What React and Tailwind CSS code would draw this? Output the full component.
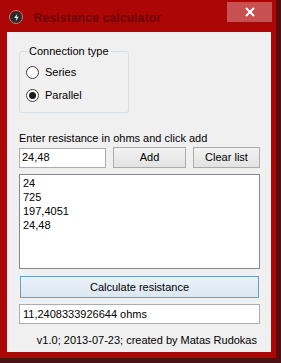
import React from "react";

function Radio({ checked, label }) {
  return (
    <div className="flex items-center gap-[6px] h-[16px]">
      <div className="w-[13px] h-[13px] rounded-full border border-[#3c3c3c] bg-white flex items-center justify-center">
        {checked && <div className="w-[7px] h-[7px] rounded-full bg-[#1a1a1a]" />}
      </div>
      <span>{label}</span>
    </div>
  );
}

const btn =
  "h-[21px] border border-[#acacac] bg-gradient-to-b from-[#f2f2f2] to-[#e3e3e3] flex items-center justify-center";

export default function App() {
  return (
    <div
      className="w-[281px] h-[363px] bg-[#4a1214] overflow-hidden text-[11px] text-black"
      style={{ fontFamily: '"Liberation Sans", Arial, sans-serif' }}
    >
      <div className="w-[277px] h-[358px] bg-[#ad0606] flex flex-col border-r border-[#7a0303]">
        {/* Title bar */}
        <div className="h-[32px] flex items-start shrink-0">
          <div className="ml-[9px] mt-[10px] w-[14px] h-[14px] rounded-full bg-[#2a2a2a] border border-[#d87070] flex items-center justify-center">
            <svg width="9" height="9" viewBox="0 0 10 10">
              <path d="M6 0.5 L2.5 5.5 L5 5.5 L4 9.5 L7.5 4.2 L5 4.2 Z" fill="#f2f2f2" />
            </svg>
          </div>
          <div className="ml-[11px] mt-[9px] text-[12px] font-bold text-[#6a0404] tracking-[0.2px] blur-[0.5px]">
            Resistance calculator
          </div>
          <div className="ml-auto mt-[2px] mr-[4px] w-[45px] h-[20px] bg-[#c75050] flex items-center justify-center">
            <svg width="10" height="10" viewBox="0 0 10 10">
              <path d="M1 1 L9 9 M9 1 L1 9" stroke="#ffffff" strokeWidth="2" />
            </svg>
          </div>
        </div>
        {/* Client area */}
        <div className="ml-[7px] mr-[5px] h-[320px] bg-[#f0f0f0] pl-[12px] flex flex-col">
          {/* Group box */}
          <fieldset className="mt-[12px] w-[110px] h-[69px] border border-[#d5dfe5] rounded-[3px] pl-[6px] pt-[6px] flex flex-col gap-[7px]">
            <legend className="ml-[2px] px-[1px] leading-[14px]">Connection type</legend>
            <Radio label="Series" />
            <Radio checked label="Parallel" />
          </fieldset>
          <div className="mt-[18px] leading-[14px]">Enter resistance in ohms and click add</div>
          <div className="mt-[2px] flex items-center">
            <div className="w-[87px] h-[20px] bg-white border border-[#abadb3] px-[2px] flex items-center">24,48</div>
            <div className={"ml-[7px] w-[73px] " + btn}>Add</div>
            <div className={"ml-[7px] w-[67px] " + btn}>Clear list</div>
          </div>
          <div className="mt-[6px] w-[241px] h-[95px] bg-white border border-[#828790] px-[3px] pt-[1px] leading-[14px]">
            <div>24</div>
            <div>725</div>
            <div>197,4051</div>
            <div>24,48</div>
          </div>
          <div className="mt-[7px] ml-[1px] w-[239px] h-[22px] border border-[#6d9ec8] bg-gradient-to-b from-[#eaf2f8] to-[#dce7f1] flex items-center justify-center">
            Calculate resistance
          </div>
          <div className="mt-[6px] w-[241px] h-[20px] bg-white border border-[#abadb3] px-[3px] flex items-center">
            11,2408333926644 ohms
          </div>
          <div className="mt-[9px] w-[238px] text-right leading-[14px]">
            v1.0; 2013-07-23; created by Matas Rudokas
          </div>
        </div>
      </div>
    </div>
  );
}
